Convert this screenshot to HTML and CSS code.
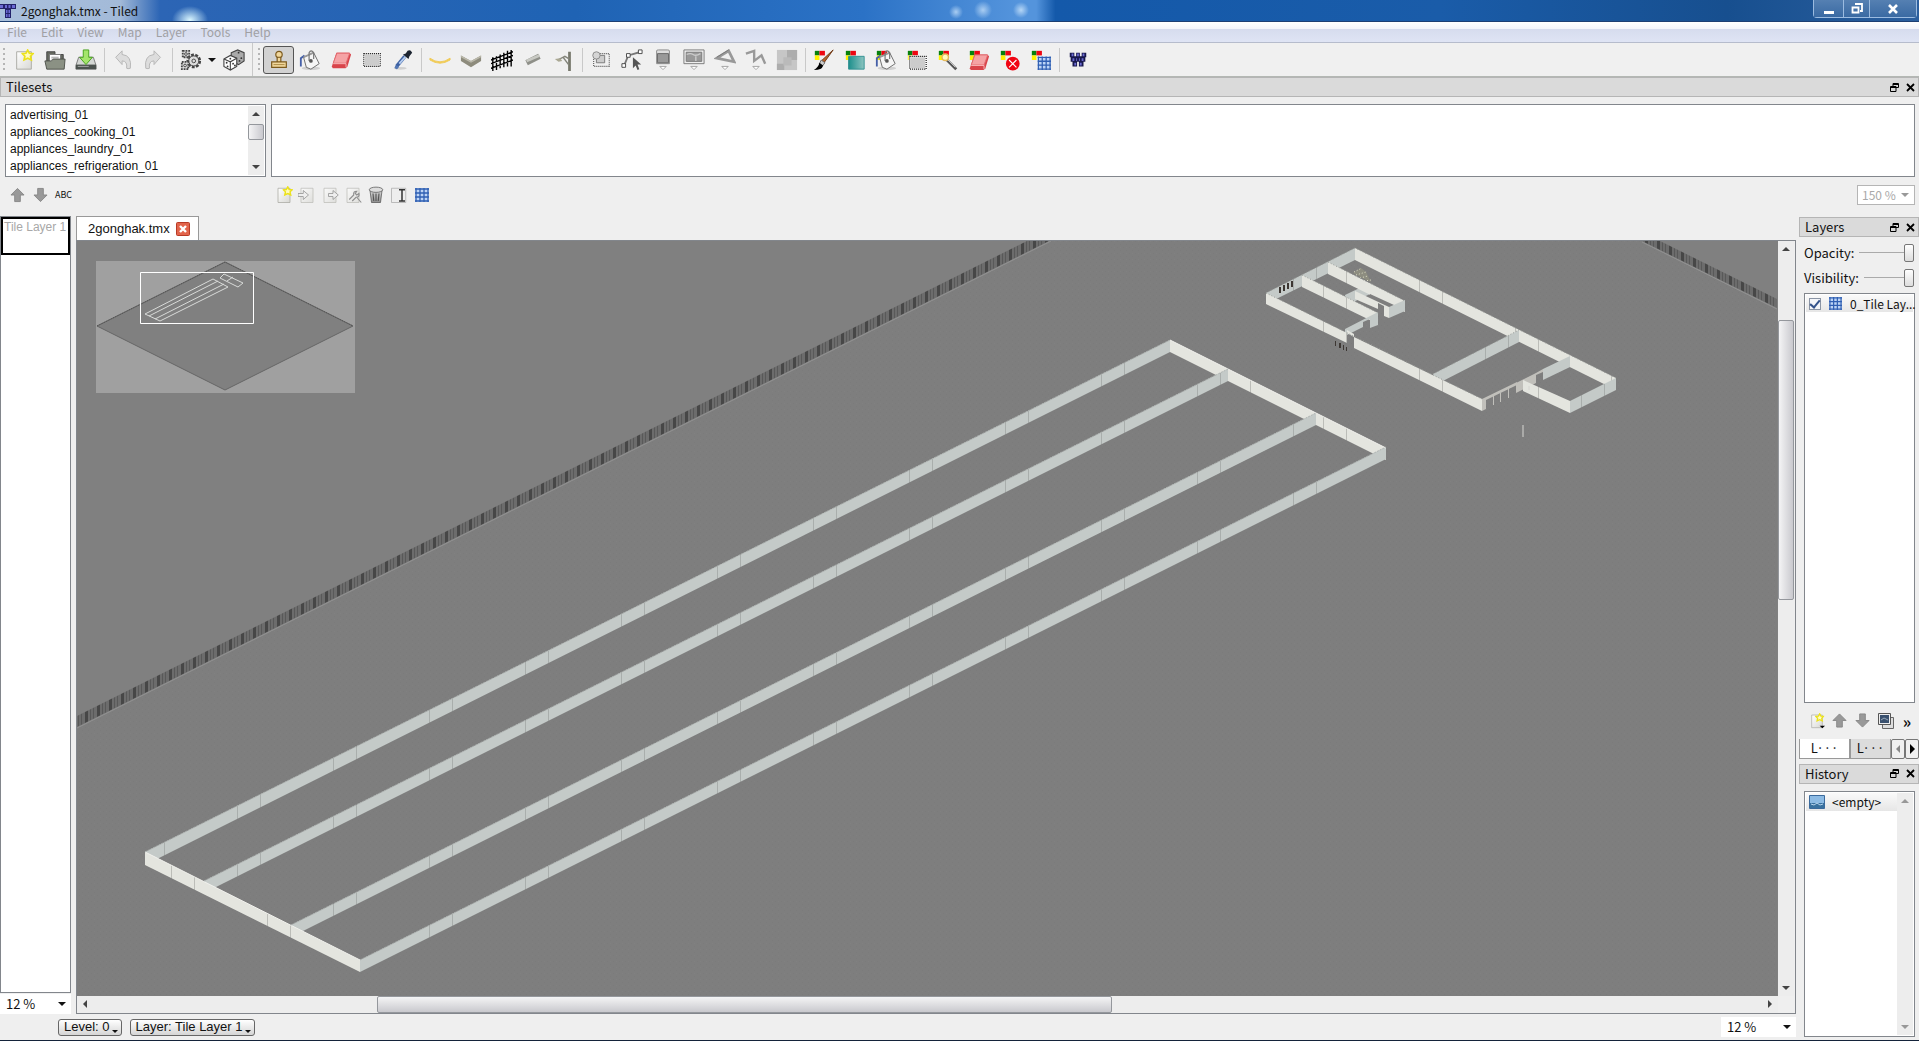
FILE: index.html
```html
<!DOCTYPE html>
<html lang="en">
<head>
<meta charset="utf-8">
<title>2gonghak.tmx - Tiled</title>
<link rel="stylesheet" href="styles.css">
</head>
<body>
<svg class="defs" aria-hidden="true">
  <defs>
    <linearGradient id="gPage" x2="1" y2="1"><stop offset="0" stop-color="#fff"/><stop offset="1" stop-color="#d8d8d4"/></linearGradient>
    <linearGradient id="gTeal" x2="1"><stop offset="0" stop-color="#1d8f8c"/><stop offset="1" stop-color="#8cc4c0"/></linearGradient>
    <linearGradient id="gMetal" x2="0" y2="1"><stop offset="0" stop-color="#d9d9d9"/><stop offset="1" stop-color="#8d8d8d"/></linearGradient>
    <symbol id="star" viewBox="0 0 12 12"><path d="M6 1l1.6 3 3.4.3-2.4 2.4.8 3.5L6 8.600l-3.400 1.600.800-3.500L1 4.300 4.400 4z" fill="#fffcc0" stroke="#ece21a" stroke-width="1.600"/></symbol>
    <symbol id="page" viewBox="0 0 24 24"><path d="M4 3h16v19H4z" fill="url(#gPage)" stroke="#a8a8a2"/></symbol>
    <symbol id="up" viewBox="0 0 16 16"><path d="M8 1l7 7h-4v7H5V8H1z" fill="#999" stroke="#888"/></symbol>
    <symbol id="down" viewBox="0 0 16 16"><path d="M8 15l7-7h-4V1H5v7H1z" fill="#999" stroke="#888"/></symbol>
    <symbol id="grid" viewBox="0 0 14 14"><path d="M.5.5h13v13H.5z" fill="#bcd4f6"/><path d="M1 0v14M5 0v14M9 0v14M13 0v14M0 1h14M0 5h14M0 9h14M0 13h14" stroke="#2f5fb3" fill="none" stroke-width="1.300"/></symbol>
    <symbol id="bucket" viewBox="0 0 24 24"><ellipse cx="13" cy="21" rx="10" ry="2" fill="#0002"/><path d="M2 19v-9l4-3" fill="none" stroke="#4560a8" stroke-width="2"/><path d="M5 9l11-5 6 12-9 6-5-2z" fill="#f5f5f5" stroke="#666"/><path d="M5 9l11-5" stroke="#999" stroke-width="2"/><path d="M11 13V4q2-4 5 0v7" fill="none" stroke="#777" stroke-width="1.300"/><circle cx="13" cy="13" r="2" fill="#555"/></symbol>
    <symbol id="eraser" viewBox="0 0 24 24"><path d="M7 4h14l2 2-4 13-2 2H3l-1-2z" fill="#d9444b"/><path d="M7.500 4.500h14l-4 11H3.500z" fill="#f5a3a5" stroke="#e36a70"/><path d="M3.500 16h14v4" fill="none" stroke="#f8b9ba"/></symbol>
    <symbol id="marq" viewBox="0 0 24 24"><path d="M3 5h18v14H3z" fill="#ccc" stroke="#fff" stroke-width="2"/><path d="M3 5h18v14H3z" fill="none" stroke="#000" stroke-width="1.200" stroke-dasharray="1.100 1.100"/></symbol>
    <symbol id="rgb" viewBox="0 0 24 24"><path d="M2 2h5v5H2z" fill="#07800c"/><path d="M7 2h6v5H7z" fill="#ee0510"/><path d="M2 7h5v5H2z" fill="#fff200"/></symbol>
    <symbol id="handle" viewBox="0 0 24 24"><path d="M8.500 19h7l-3.500 3.500z" fill="#fff" stroke="#a0a0a0"/></symbol>
    <symbol id="float" viewBox="0 0 9 9"><path d="M3 .5h5.500v4H6M3 1.500h5.500M3 .5v2.500M.5 3.500H6v5H.5zM.5 4.500H6" fill="none" stroke="#000"/></symbol>
    <symbol id="close" viewBox="0 0 9 9"><path d="M1 1l7 7M8 1L1 8" stroke="#000" stroke-width="1.800"/></symbol>
    <symbol id="logo" viewBox="0 0 16 16"><path d="M0 1h16v5h-5v9H5V6H0z" fill="#23236b"/><path d="M0 2h3v3H0zM5 2h2v3H5zM8.500 2h2v3h-2zM12 2h3v3h-3zM6 7h1.500v3H6zM8.500 7H10v3H8.500zM6 11h1.500v3H6zM8.500 11H10v3H8.500z" fill="#6a6ad4"/></symbol>
  </defs>
</svg>

<header class="titlebar">
  <svg class="logo" width="16" height="16"><use href="#logo"/></svg>
  <span class="caption">2gonghak.tmx - Tiled</span>
  <div class="winbtns">
    <button class="win win-min" aria-label="Minimize"><svg width="12" height="12"><path d="M1 8h10v3H1z" fill="#fff"/></svg></button>
    <button class="win" aria-label="Restore"><svg width="12" height="12"><path d="M4 1h7v7H9M1.500 4.500h6v5h-6z" fill="none" stroke="#fff" stroke-width="1.800"/></svg></button>
    <button class="win win-close" aria-label="Close"><svg width="12" height="12"><path d="M2 2l8 8M10 2l-8 8" stroke="#fff" stroke-width="2.600"/></svg></button>
  </div>
</header>
<nav class="menubar">
  <a href="#">File</a><a href="#">Edit</a><a href="#">View</a><a href="#">Map</a><a href="#">Layer</a><a href="#">Tools</a><a href="#">Help</a>
</nav>
<div class="toolbar">
  <span class="grip"></span>
  <button class="tool" aria-label="New"><svg viewBox="0 0 24 24"><use href="#page"/><use href="#star" x="9" y="0" width="14" height="14"/></svg></button>
  <button class="tool" aria-label="Open"><svg viewBox="0 0 24 24"><path d="M3 3h9v3h9v8H3z" fill="#666a60" stroke="#444"/><path d="M6 6h12v10H6z" fill="#fff" stroke="#777"/><path d="M8 9h8M8 11h8" stroke="#999"/><path d="M1 13h7l2-2h13l-1 11H3z" fill="#8b9184" stroke="#4d5049"/></svg></button>
  <button class="tool" aria-label="Save"><svg viewBox="0 0 24 24"><path d="M4 9h16l3 9v4H1v-4z" fill="#d4d7d4" stroke="#777"/><path d="M1 17h22v5H1z" fill="#4b524e"/><path d="M3 19h12" stroke="#aaa"/><path d="M9 1h6v8h4l-7 8-7-8h4z" fill="#a4e56b" stroke="#43a018"/></svg></button>
  <span class="sep"></span>
  <button class="tool" aria-label="Undo"><svg viewBox="0 0 24 24"><path d="M4 9l7-7v4q11 1 9 15-3 1-4 0 1-8-5-8v4z" fill="#ddd" stroke="#b3b3b3"/></svg></button>
  <button class="tool" aria-label="Redo"><svg viewBox="0 0 24 24"><path d="M19 9l-7-7v4Q1 7 3 21q3 1 4 0-1-8 5-8v4z" fill="#ddd" stroke="#b3b3b3"/></svg></button>
  <span class="sep"></span>
  <button class="tool" aria-label="Commands"><svg viewBox="0 0 24 24"><g fill="#ddd" stroke="#444"><circle cx="15" cy="13" r="6.500" stroke-dasharray="3 1.500" stroke-width="3"/><circle cx="15" cy="13" r="5.500"/><circle cx="15" cy="13" r="2"/><path d="M3 2h7v7H3zM2 14h7v8H2z" stroke-dasharray="2 1" stroke-width="2"/><circle cx="6.500" cy="5.500" r="1.500"/><circle cx="5.500" cy="18" r="1.500"/></g></svg></button>
  <button class="drop" aria-label="Command list"></button>
  <button class="tool" aria-label="Random Mode"><svg viewBox="0 0 24 24"><g stroke="#444" stroke-width="1.200"><path d="M9 4l7-3 7 3v9l-6 4-8-4z" fill="#aaa"/><path d="M1 11l7-4 7 3v9l-7 4-7-4z" fill="#fff"/><path d="M1 11l7 3 7-4M8 14v9" fill="none"/></g><g fill="#333"><circle cx="4" cy="15" r="1"/><circle cx="5" cy="19" r="1"/><circle cx="11" cy="16" r="1"/><circle cx="13" cy="18" r="1"/><circle cx="8" cy="10.500" r="1"/><circle cx="17" cy="4" r="1"/><circle cx="20" cy="10" r="1"/><circle cx="18" cy="13" r="1"/></g></svg></button>
  <span class="bar-end"></span><span class="grip"></span>
  <button class="tool on" aria-label="Stamp Brush"><svg viewBox="0 0 24 24"><g fill="#f1d79c" stroke="#7c5a1d" stroke-width="1.300"><circle cx="12" cy="6" r="3.500"/><path d="M10 9h4v5h-4zM4 14h16v6H4z"/></g><path d="M6 17h12" stroke="#a98540"/></svg></button>
  <button class="tool" aria-label="Bucket Fill"><svg viewBox="0 0 24 24"><use href="#bucket"/></svg></button>
  <button class="tool" aria-label="Eraser"><svg viewBox="0 0 24 24"><use href="#eraser"/></svg></button>
  <button class="tool" aria-label="Rectangular Select"><svg viewBox="0 0 24 24"><use href="#marq"/></svg></button>
  <button class="tool" aria-label="Dropper"><svg viewBox="0 0 24 24"><ellipse cx="9" cy="21" rx="7" ry="1.500" fill="#0002"/><path d="M14 8L5 19" stroke="#3e62a3" stroke-width="4"/><path d="M15 8L8 16" stroke="#b5cdf0" stroke-width="2"/><circle cx="5" cy="20" r="2" fill="#5277b5"/><path d="M12 6l6 5 1-3 3-4q-2-4-5-2l-2 3z" fill="#1c2430"/></svg></button>
  <span class="sep"></span>
  <button class="tool" aria-label="Road"><svg viewBox="0 0 24 24"><path d="M1 10q11 8 22 0v2q-11 7-22 0z" fill="#f7cf4a" stroke="#edc95c"/></svg></button>
  <button class="tool" aria-label="Curb"><svg viewBox="0 0 24 24"><path d="M1 7l11 6 11-6v6l-11 7-11-7z" fill="#8d8b7c"/><path d="M1 7l11 6 11-6v2l-11 6L1 9z" fill="#bab8aa"/></svg></button>
  <button class="tool" aria-label="Fence"><svg viewBox="0 0 24 24"><path d="M2 9v15M6 8v15M10 6v15M14 4v16M18 2v17M22 1v18M0 12l24-9M0 16l24-9M0 21l24-9" stroke="#000" stroke-width="1.500"/></svg></button>
  <button class="tool" aria-label="Wall"><svg viewBox="0 0 24 24"><path d="M5 15L19 8" stroke="#8e8f88" stroke-width="6"/><path d="M5 13L19 7" stroke="#c8c9c3" stroke-width="3"/></svg></button>
  <button class="tool" aria-label="Street light"><svg viewBox="0 0 24 24"><path d="M18 3v21" stroke="#77786c" stroke-width="3"/><path d="M5 12l8-4 5 3M11 9l6 8" fill="none" stroke="#83847a" stroke-width="1.500"/><path d="M2 11l6-1 2 3-4 1z" fill="#aaa893"/></svg></button>
  <span class="sep"></span>
  <button class="tool" aria-label="Select Objects"><svg viewBox="0 0 24 24"><path d="M4 5h17v14H4z" fill="none" stroke="#555" stroke-width="1.200" stroke-dasharray="1.100 1.100"/><path d="M9 7h7v8H7v-4" fill="#ccc" stroke="#777"/><circle cx="7" cy="7" r="4" fill="#d5d5d5" stroke="#888"/></svg></button>
  <button class="tool" aria-label="Edit Polygons"><svg viewBox="0 0 24 24"><path d="M3 19l5-12 14-4" fill="none" stroke="#777" stroke-width="2"/><g fill="#fff" stroke="#444"><path d="M1 16h4v4H1zM6 5h4v4H6zM19 1h4v4h-4z"/></g><path d="M13 9v12l3-3 2 5 2-1-2-5h4z" fill="#555"/></svg></button>
  <button class="tool" aria-label="Insert Tile"><svg viewBox="0 0 24 24"><path d="M5 2q0-1 2-1h10q2 0 2 1v14H5z" fill="#ddd" stroke="#888"/><path d="M6 5h12v10H6z" fill="#999" stroke="#666"/><use href="#handle"/></svg></button>
  <button class="tool" aria-label="Insert Image"><svg viewBox="0 0 24 24"><path d="M1 1h22v15H1z" fill="#eee" stroke="#777"/><path d="M3.500 3.500h17v10h-17z" fill="#999" stroke="#777"/><path d="M4 6q4-2 7 0t8-1M14 13V8" fill="none" stroke="#ccc" stroke-width="1.500"/><use href="#handle"/></svg></button>
  <button class="tool" aria-label="Insert Polygon"><svg viewBox="0 0 24 24"><path d="M3 10l13-8 6 12z" fill="none" stroke="#999" stroke-width="3"/><path d="M3 9l13-8" stroke="#777"/><use href="#handle"/></svg></button>
  <button class="tool" aria-label="Insert Polyline"><svg viewBox="0 0 24 24"><path d="M1 5l9-3v11l8-6 4 9" fill="none" stroke="#999" stroke-width="2.600"/><use href="#handle"/></svg></button>
  <button class="tool" aria-label="Room"><svg viewBox="0 0 24 24"><path d="M1 1h22v22H1z" fill="#c6c6c6"/><path d="M12 1h11v11H12zM1 16h8v7H1z" fill="#adadad"/><path d="M8 9h9v9H8z" fill="#bababa"/></svg></button>
  <span class="sep"></span>
  <button class="tool" aria-label="BMP Brush"><svg viewBox="0 0 24 24"><use href="#rgb"/><path d="M22 1l-10 14-3-2z" fill="#b4622a" stroke="#6b3310"/><path d="M9 12l4 3-3 4-3-3z" fill="#ccc" stroke="#666"/><path d="M7 15l4 3q-1 5-10 5 5-3 6-8z" fill="#000"/></svg></button>
  <button class="tool" aria-label="BMP Rectangle"><svg viewBox="0 0 24 24"><use href="#rgb"/><path d="M5 8h17v14H5z" fill="url(#gTeal)" stroke="#2f8f90"/></svg></button>
  <button class="tool" aria-label="BMP Bucket"><svg viewBox="0 0 24 24"><use href="#rgb"/><use href="#bucket"/></svg></button>
  <button class="tool" aria-label="BMP Select"><svg viewBox="0 0 24 24"><use href="#rgb"/><use href="#marq" x="1" y="3"/></svg></button>
  <button class="tool" aria-label="BMP Wand"><svg viewBox="0 0 24 24"><use href="#rgb"/><path d="M9 10l12 12" stroke="#555" stroke-width="3"/><path d="M9 9l11 11" stroke="#ccc"/><circle cx="9" cy="9" r="3.500" fill="#fffbc0" stroke="#e5b95a" stroke-width="1.500"/></svg></button>
  <button class="tool" aria-label="BMP Eraser"><svg viewBox="0 0 24 24"><use href="#rgb"/><use href="#eraser" y="2"/></svg></button>
  <button class="tool" aria-label="BMP Clear"><svg viewBox="0 0 24 24"><use href="#rgb"/><circle cx="15" cy="16" r="7.500" fill="#f00513"/><path d="M11 12l8 8M19 12l-8 8" stroke="#fff" stroke-width="1.200"/></svg></button>
  <button class="tool" aria-label="BMP To Tiles"><svg viewBox="0 0 24 24"><use href="#rgb"/><use href="#grid" x="8" y="8" width="15" height="15"/></svg></button>
  <span class="sep"></span>
  <button class="tool" aria-label="WorldEd"><svg viewBox="0 0 24 24"><path d="M3 4h5v4h2V4h4v4h2V4h5v5h-1v5h-2v5h-5v-5h-2v5H6v-5H4V9H3z" fill="#17174d"/><path d="M5 5h2v3H5zM11 5h2v3h-2zM17 5h2v3h-2zM6 10h2v3H6zM10 10h1v3h-1zM13 10h1v3h-1zM16 10h2v3h-2zM8 15h2v3H8zM14 15h2v3h-2z" fill="#6a6ad0"/></svg></button>
</div>

<section class="tilesets">
  <h2 class="dock-title"><span>Tilesets</span><button aria-label="Float"><svg width="9" height="9"><use href="#float"/></svg></button><button aria-label="Close"><svg width="9" height="9"><use href="#close"/></svg></button></h2>
  <div class="tileset-body">
    <div class="names frame">
      <ul><li>advertising_01</li><li>appliances_cooking_01</li><li>appliances_laundry_01</li><li>appliances_refrigeration_01</li></ul>
      <div class="vbar"><button class="arr u" aria-label="Up"></button><span class="thumb short"></span><button class="arr d push" aria-label="Down"></button></div>
    </div>
    <div class="tiles frame"></div>
    <div class="mini-tools order">
      <button aria-label="Move up"><svg width="15" height="16"><use href="#up"/></svg></button>
      <button aria-label="Move down"><svg width="15" height="16"><use href="#down"/></svg></button>
      <button class="abc">ABC</button>
    </div>
    <div class="mini-tools">
      <button aria-label="New tileset"><svg viewBox="0 0 24 24"><use href="#page"/><use href="#star" x="10" y="0" width="14" height="14"/></svg></button>
      <button aria-label="Import"><svg class="dim" viewBox="0 0 24 24"><use href="#page"/><path d="M0 10h7V6l7 6-7 6v-4H0z" fill="#eee" stroke="#666"/></svg></button>
      <button aria-label="Export"><svg class="dim" viewBox="0 0 24 24"><use href="#page"/><path d="M10 10h6V6l7 6-7 6v-4h-6z" fill="#eee" stroke="#666"/></svg></button>
      <button aria-label="Properties"><svg class="dim" viewBox="0 0 24 24"><use href="#page"/><path d="M7 18l6-6q-1-5 4-5l-2 3 2 2 3-2q1 5-4 5l-5 5M17 15l6 7" fill="none" stroke="#666" stroke-width="1.500"/></svg></button>
      <button aria-label="Delete"><svg viewBox="0 0 24 24"><path d="M4 6h16l-2 16H6z" fill="url(#gMetal)" stroke="#555"/><ellipse cx="12" cy="5" rx="9" ry="3.500" fill="#ddd" stroke="#555"/><path d="M8 10l1 10M12 10v10M16 10l-1 10" stroke="#555" stroke-width="1.500"/></svg></button>
      <button aria-label="Rename"><svg viewBox="0 0 24 24"><path d="M2 3h19v19H2z" fill="#eee" stroke="#aaa"/><path d="M12 5h8M12 20h8M16 5v15" stroke="#333" stroke-width="2"/></svg></button>
      <button aria-label="Grid"><svg width="14" height="14"><use href="#grid"/></svg></button>
      <label class="combo zoomset off"><select disabled aria-label="Tileset zoom"><option>150 %</option></select></label>
    </div>
  </div>
</section>

<main class="work">
  <aside class="levels">
    <div class="level-list frame"><div class="level">Tile Layer 1</div></div>
    <label class="combo"><select aria-label="Mini zoom"><option>12 %</option></select></label>
  </aside>

  <section class="center">
    <div class="tabs"><div class="tab">2gonghak.tmx<button aria-label="Close tab"><svg width="14" height="14"><rect x=".5" y=".5" width="13" height="13" rx="1" fill="#e2644b" stroke="#b83a25"/><path d="M4 4l6 6M10 4l-6 6" stroke="#fff" stroke-width="2.400"/></svg></button></div></div>
    <div class="view">
      <svg class="map" role="img" aria-label="Isometric map">
        <defs>
          <pattern id="floor" width="6" height="6" patternUnits="userSpaceOnUse"><path d="M0 0h6v6H0z" fill="#7e7e7e"/><path d="M1 1h1v1H1zM4 4h1v1H4z" fill="#7b7b7b"/><path d="M4 1h1v1H4z" fill="#818181"/></pattern>
          <pattern id="pale" width="96" height="96" patternUnits="userSpaceOnUse"><path d="M0 0h96v96H0z" fill="#e4e5df"/><path d="M2 0h1v96H2zM75 0h1v96h-1z" fill="#bcbdb8"/></pattern>
          <pattern id="cool" width="96" height="96" patternUnits="userSpaceOnUse"><path d="M0 0h96v96H0z" fill="#c4cac8"/><path d="M45 0h1v96h-1zM68 0h1v96h-1z" fill="#a9aeac"/></pattern>
          <pattern id="fence" width="12" height="12" patternUnits="userSpaceOnUse"><path d="M0 0h12v12H0z" fill="#6c6c6c"/><path d="M1 0h3v12H1z" fill="#474747"/><path d="M6 0h1v12H6zM9 0h1v12H9z" fill="#595959"/></pattern>
        </defs>
        <g transform="translate(-77 -241)">
          <path d="M77 727L1049 241H1642L1777 308V1000H77z" fill="url(#floor)"/>
          <path d="M77 716L1027 241H1049L77 727z" fill="url(#fence)"/>
          <path d="M1642 241H1660L1777 299V308z" fill="url(#fence)"/>
          <path d="M77 728L1051 241M1642 242L1777 309" stroke="#929292" fill="none"/>
          <path d="M145 852L1170 340v12L145 865z" fill="url(#cool)"/>
          <path d="M1170 340L1386 448v12L1170 352z" fill="url(#pale)"/>
          <path d="M204 881L1228 369v12L204 893zM291 925L1316 413v12L291 937z" fill="url(#cool)"/>
          <path d="M145 852L360 960v12L145 865z" fill="url(#pale)"/>
          <path d="M360 960L1386 447v12L360 972z" fill="url(#cool)"/>
          <path d="M145 852L360 960M1170 340L1386 448" stroke="#f1f1ed" fill="none"/>
          <path d="M145 852L1170 340M204 881L1228 369M291 925L1316 413M360 960L1386 447" stroke="#afb4b2" stroke-dasharray="2 1" fill="none"/>

          <path d="M1266 293L1355 248v12L1266 304z" fill="url(#cool)"/>
          <path d="M1355 248L1616 378v12L1355 260z" fill="url(#pale)"/>
          <path d="M1353 273l8-5 5 4 5 10-7-3z" fill="#8d8d80"/>
          <path d="M1354 272l8-4M1356 275l10-3M1360 278l8-2M1364 281l7-1" stroke="#e0e0c8" stroke-dasharray="1 2"/>
          <path d="M1345 295L1370 283v11L1345 306z" fill="url(#cool)"/>
          <path d="M1328 262L1405 301v11L1328 274z" fill="url(#pale)"/>
          <path d="M1370 294l24 11-2 2-22-9z" fill="#7e7e7e"/>
          <path d="M1355 291L1389 307v11l-5-2v-10l-6-3v6l-23-10z" fill="#e4e5df"/>
          <path d="M1389 307L1405 300v11L1389 318z" fill="#c4cac8"/>
          <path d="M1302 275L1378 313v11L1302 287z" fill="url(#pale)"/>
          <path d="M1345 329L1378 312v13l-8 3v-9l-7 3v5l-18 9z" fill="#c4cac8"/>
          <path d="M1433 374L1519 330v12L1433 386z" fill="url(#cool)"/>
          <path d="M1266 293L1347 333v10L1266 304zM1354 337L1482 399v12L1354 348z" fill="url(#pale)"/>
          <path d="M1347 333l7 4v-3l-7-4z" fill="#e4e5df"/>
          <path d="M1482 399L1517 382v3L1486 400v9l-4 2zM1493 396h1v9h-1zM1500 393h1v9h-1zM1508 389h1v9h-1zM1516 383l20-10v10l-20 10zM1536 373l7-4v3l-7 3z" fill="#c1c0bb"/>
          <path d="M1543 369L1570 356v11L1543 380z" fill="#c4cac8"/>
          <path d="M1523 380L1570 401v12L1523 391z" fill="url(#pale)"/>
          <path d="M1570 401L1616 378v12L1570 413z" fill="url(#cool)"/>
          <path d="M1279 287h2v6h-2zM1283 285h2v6h-2zM1287 283h2v6h-2zM1291 281h2v6h-2zM1335 341h1v5h-1zM1339 343h2v5h-2zM1343 345h1v5h-1zM1346 347h1v4h-1z" fill="#3d3733"/>
          <path d="M1266 293L1355 248L1616 378M1328 262L1405 301M1302 275L1378 313M1266 293L1482 399M1433 374L1519 330" fill="none" stroke="#999d99" stroke-dasharray="1 2"/>
          <path d="M1523 425v12M1529 386v4" stroke="#d6d6d2"/>
        </g>
      </svg>
      <svg class="overview" width="259" height="132" role="img" aria-label="Overview">
        <path d="M0 0h259v132H0z" fill="#a0a0a0"/>
        <path d="M129 1L257 65 129 129 1 65z" fill="#808080" stroke="#666"/>
        <path d="M1 65L129 1 257 65" fill="none" stroke="#505050" stroke-dasharray="1 1"/>
        <path d="M49 53L117 18 132 26 64 60zM53 55L122 20M59 58L128 23M124 17l4-4 19 9-5 4zM131 20l6-4" fill="none" stroke="#d8dad8"/>
        <path d="M44.500 11.500h113v51h-113z" fill="none" stroke="#fff"/>
      </svg>
      <div class="vbar"><button class="arr u" aria-label="Up"></button><span class="space-a"></span><span class="thumb"></span><span class="space-b"></span><button class="arr d" aria-label="Down"></button></div>
      <div class="hbar"><button class="arr l" aria-label="Left"></button><span class="space-a"></span><span class="thumb"></span><span class="space-b"></span><button class="arr r" aria-label="Right"></button></div>
    </div>
    <footer class="status">
      <button class="pick">Level: 0<i></i></button>
      <button class="pick">Layer: Tile Layer 1<i></i></button>
      <label class="combo zoom"><select aria-label="Map zoom"><option>12 %</option></select></label>
    </footer>
  </section>

  <aside class="docks">
    <h2 class="dock-title"><span>Layers</span><button aria-label="Float"><svg width="9" height="9"><use href="#float"/></svg></button><button aria-label="Close"><svg width="9" height="9"><use href="#close"/></svg></button></h2>
    <label class="slide">Opacity:<input type="range" value="100"></label>
    <label class="slide">Visibility:<input type="range" value="100"></label>
    <div class="layer-list frame"><label class="layer"><input type="checkbox" checked><svg width="13" height="13"><use href="#grid"/></svg><span>0_Tile Lay...</span></label></div>
    <div class="layer-tools">
      <button aria-label="New layer"><svg width="16" height="16" viewBox="0 0 24 24"><use href="#page"/><use href="#star" x="9" y="0" width="14" height="14"/><path d="M16 19h8l-4 4z"/></svg></button>
      <button aria-label="Raise"><svg width="15" height="15"><use href="#up"/></svg></button>
      <button aria-label="Lower"><svg width="15" height="15"><use href="#down"/></svg></button>
      <button aria-label="Duplicate"><svg width="16" height="16"><path d="M4.500 4.500h11v11h-11z" fill="#ddd" stroke="#666"/><path d="M.5.500h12v11H.5z" fill="#eee" stroke="#555"/><path d="M2 2h9v8H2z" fill="#39506e"/><path d="M3 7l3-2 4 2" stroke="#9ab" fill="none"/></svg></button>
      <button class="more" aria-label="More">»</button>
    </div>
    <div class="dock-tabs"><button class="sel">L···</button><button>L···</button><button class="nav off" aria-label="Previous"><i></i></button><button class="nav" aria-label="Next"><i></i></button></div>
    <h2 class="dock-title"><span>History</span><button aria-label="Float"><svg width="9" height="9"><use href="#float"/></svg></button><button aria-label="Close"><svg width="9" height="9"><use href="#close"/></svg></button></h2>
    <div class="history frame">
      <div class="entry"><svg width="16" height="14"><path d="M.5.500h15v13H.5z" fill="#8dbbe4" stroke="#3b6a9c"/><path d="M1 8h14v5H1z" fill="#39719f"/><path d="M2 9l3 1 3-2 3 2 3-1" stroke="#b9d6ee" fill="none"/></svg><span>&lt;empty&gt;</span></div>
      <div class="vbar faint"><button class="arr u" aria-label="Up"></button><button class="arr d push" aria-label="Down"></button></div>
    </div>
  </aside>
</main>
</body>
</html>
```
FILE: styles.css
```css
* { box-sizing: border-box; }
body {
  margin: 0;
  height: 100vh;
  display: flex;
  flex-direction: column;
  overflow: hidden;
  background: #efefef;
  border-bottom: 1px solid #14233a;
  font: 13px/16px "Noto Sans CJK KR", sans-serif;
  color: #111;
}
button, select { font: inherit; color: inherit; }
button { border: 0; padding: 0; background: none; display: flex; align-items: center; justify-content: center; }
svg { display: block; flex: none; }
.defs { position: absolute; width: 0; height: 0; }
.frame { background: #fff; border: 1px solid #82868c; }

.titlebar {
  height: 22px;
  flex: none;
  display: flex;
  align-items: center;
  border-bottom: 1px solid #1d3f73;
  background:
    radial-gradient(ellipse 18px 14px at 190px 20px, #d9f6ff, #8cc8f000),
    radial-gradient(circle 7px at 956px 12px, #a9cdf2, #a9cdf200),
    radial-gradient(circle 9px at 983px 10px, #a9cdf2, #a9cdf200),
    radial-gradient(circle 8px at 1021px 10px, #b5d6f6, #b5d6f600),
    linear-gradient(90deg, #a9c0dc 0, #a3bad8 120px, #2c65b5 160px, #1f63b4 30%, #2b72c6 45%, #5494dc 53%, #5494dc 54%, #1459aa 55%, #1a5ca9 75%, #174f8f 90%, #2b5f9e 100%);
}
.logo { margin-right: 5px; }
.caption { flex: 1; font-size: 12px; }
.winbtns { display: flex; height: 18px; align-self: flex-start; margin-right: 2px; border: 1px solid #9bbbe0; border-top: 0; border-radius: 0 0 4px 4px; }
.win { width: 26px; background: linear-gradient(#5580b2, #3a6aa3); }
.win + .win { border-left: 1px solid #9bbbe0; }
.win-min { width: 29px; }
.win-close { width: 47px; }

.menubar {
  height: 21px;
  flex: none;
  display: flex;
  align-items: center;
  gap: 14px;
  padding-left: 7px;
  border-bottom: 1px solid #b6bccc;
  background: linear-gradient(#fff 0, #f3f5fb 35%, #d6dcee 36%, #dfe4f4 100%);
  font-size: 12px;
}
.menubar a { color: #a0a0a4; text-decoration: none; }

.toolbar { height: 34px; flex: none; display: flex; align-items: center; border-bottom: 1px solid #b4b8b4; background: #f0f0f0; }
.tool { width: 31px; height: 28px; flex: none; }
.tool svg { width: 22px; height: 22px; }
.tool.on { border: 1px solid #555; border-radius: 3px; background: #d2d2d2; }
.grip { width: 8px; height: 26px; background: radial-gradient(circle 1px at 4px 2px, #b5b5b5 99%, #0000) 0 0 / 8px 5px; }
.sep { width: 6px; height: 24px; background: linear-gradient(#c9c9c9, #c9c9c9) center / 1px 100% no-repeat; }
.bar-end { width: 1px; height: 100%; margin: 0 2px 0 3px; background: #c9c9c9; }
.drop { width: 12px; height: 28px; }
.drop::before { content: ""; border: 4px solid #0000; border-top-color: #111; border-bottom: 0; }

.dock-title {
  height: 20px;
  flex: none;
  margin: 0;
  padding: 0 3px 0 5px;
  display: flex;
  align-items: center;
  gap: 7px;
  background: #dadada;
  border: 1px solid #b5b5b5;
  font: inherit;
}
.dock-title span { flex: 1; }
.tilesets { flex: none; }
.tileset-body { display: grid; grid-template-columns: 261px 1fr; column-gap: 5px; padding: 7px 4px 0 5px; }
.names { height: 73px; display: flex; padding: 1px; font: 12px "Liberation Sans", sans-serif; }
.names ul { flex: 1; margin: 0; padding: 1px 3px; list-style: none; line-height: 17px; }
.mini-tools { height: 39px; display: flex; align-items: center; padding: 0 0 3px 1px; }
.mini-tools button { width: 23px; height: 20px; flex: none; }
.mini-tools button svg[viewBox] { width: 18px; height: 18px; }
.mini-tools .dim { opacity: .7; }
.mini-tools .abc { font-size: 9px; }

.vbar { width: 16px; flex: none; display: flex; flex-direction: column; background: #ededed; }
.hbar { display: flex; height: 17px; background: #ededed; }
.arr { width: 16px; height: 16px; flex: none; }
.arr::before { content: ""; border: 4px solid #0000; }
.u::before { border-top: 0; border-bottom-color: #444; }
.d::before { border-bottom: 0; border-top-color: #444; }
.l::before { border-left: 0; border-right-color: #444; }
.r::before { border-right: 0; border-left-color: #444; }
.push { margin-top: auto; }
.faint .arr { opacity: .5; }
.thumb { border: 1px solid #94979c; border-radius: 2px; background: linear-gradient(90deg, #f4f4f5, #c9c9ce); }
.short { height: 16px; margin-top: 2px; }

.combo { position: relative; display: block; height: 20px; background: #fff; }
.combo select { appearance: none; width: 100%; height: 100%; border: 0; padding: 0 6px; background: none; }
.combo::after { content: ""; position: absolute; right: 5px; top: 8px; border: 4px solid #0000; border-top-color: #111; border-bottom: 0; }
.zoomset { width: 58px; margin-left: auto; border: 1px solid #b5b5b5; }
.zoomset select { padding: 0 4px; font-size: 12px; }
.off { color: #858585; }
.combo.off::after { border-top-color: #999; top: 7px; }

.work { flex: 1; min-height: 0; display: flex; }
.levels { width: 71px; flex: none; display: flex; flex-direction: column; padding-bottom: 26px; gap: 1px; }
.level-list { flex: 1; }
.level { height: 38px; border: 2px solid #000; padding-left: 1px; font: 12px/16px "Liberation Sans", sans-serif; color: #a8a8a8; white-space: nowrap; }
.center { flex: 1; min-width: 0; margin-left: 5px; display: flex; flex-direction: column; }
.tabs { display: flex; height: 24px; flex: none; }
.tab { display: flex; align-items: center; gap: 6px; padding: 0 12px 0 11px; width: 123px; background: #fff; border: 1px solid #999; border-bottom: 0; font-size: 13px; font-family: "Liberation Sans", sans-serif; }
.view {
  flex: 1;
  min-height: 0;
  position: relative;
  display: grid;
  grid-template: minmax(0, 1fr) 17px / minmax(0, 1fr) 17px;
  border: 1px solid #82868c;
  background: #efefef;
}
.map { width: 100%; height: 100%; background: #808080; overflow: hidden; }
.overview { position: absolute; left: 19px; top: 20px; }
.view .vbar .thumb { flex: 278; }
.view .vbar .space-a { flex: 63; }
.view .vbar .space-b { flex: 381; }
.view .hbar .thumb { flex: 735; background: linear-gradient(#f4f4f5, #c9c9ce); }
.view .hbar .space-a { flex: 285; }
.view .hbar .space-b { flex: 652; }
.status { height: 26px; flex: none; display: flex; align-items: center; gap: 8px; }
.pick { height: 17px; border: 1px solid #666; border-radius: 3px; padding: 0 3px 0 5px; background: linear-gradient(#fff, #d5d5d5); gap: 2px; font-family: "Liberation Sans", sans-serif; }
.pick i { align-self: flex-end; margin-bottom: 2px; border: 3px solid #0000; border-top-color: #111; border-bottom: 0; }
.pick:first-child { margin-left: -18px; }
.zoom { width: 75px; margin-left: auto; }

.docks { width: 120px; flex: none; margin-left: 3px; display: flex; flex-direction: column; padding: 1px 0 3px; }
.slide { height: 25px; display: flex; align-items: center; gap: 5px; padding: 0 5px; }
.slide:nth-of-type(1) { margin-top: 3px; }
.slide input { flex: 1; min-width: 0; margin: 0; appearance: none; height: 18px; background: linear-gradient(#aaa, #aaa) center / 100% 1px no-repeat; }
.slide input::-webkit-slider-thumb { appearance: none; width: 10px; height: 18px; border: 1px solid #777; border-radius: 2px; background: linear-gradient(#fff, #ddd); }
.layer-list { flex: 411; margin: 3px 4px 0 5px; padding: 1px; }
.layer { display: flex; align-items: center; gap: 8px; height: 17px; padding: 0 3px; background: linear-gradient(#fafafa, #e6e6e6); font-size: 12px; white-space: nowrap; }
.layer input { appearance: none; width: 12px; height: 12px; margin: 0; border: 1px solid #8b95a5; background: #f4f6fa; display: grid; place-items: center; flex: none; }
.layer input:checked::before { content: ""; width: 4px; height: 8px; margin-top: -2px; border: solid #33538c; border-width: 0 2px 2px 0; transform: rotate(40deg); }
.layer-tools { height: 36px; flex: none; display: flex; align-items: center; padding-left: 6px; }
.layer-tools button { width: 23px; }
.layer-tools .more { width: 20px; font-size: 16px; font-weight: bold; }
.dock-tabs { height: 20px; flex: none; display: flex; margin-bottom: 5px; }
.dock-tabs button { flex: 1; border: 1px solid #999; border-top: 0; background: #dcdcdc; }
.dock-tabs .sel { flex: 0 0 51px; background: #fff; }
.dock-tabs .nav { flex: 0 0 14px; border: 1px solid #777; border-radius: 2px; background: #f0f0f0; }
.nav i { border: 5px solid #0000; border-left-color: #000; border-right: 0; }
.nav.off i { border: 4px solid #0000; border-right-color: #888; border-left: 0; }
.history { flex: 245; margin: 7px 4px 0 5px; padding: 1px; display: flex; align-items: stretch; }
.entry { flex: 1; height: 18px; display: flex; align-items: center; gap: 7px; padding-left: 3px; background: linear-gradient(#fafafa, #e6e6e6); font-size: 12px; }
```
